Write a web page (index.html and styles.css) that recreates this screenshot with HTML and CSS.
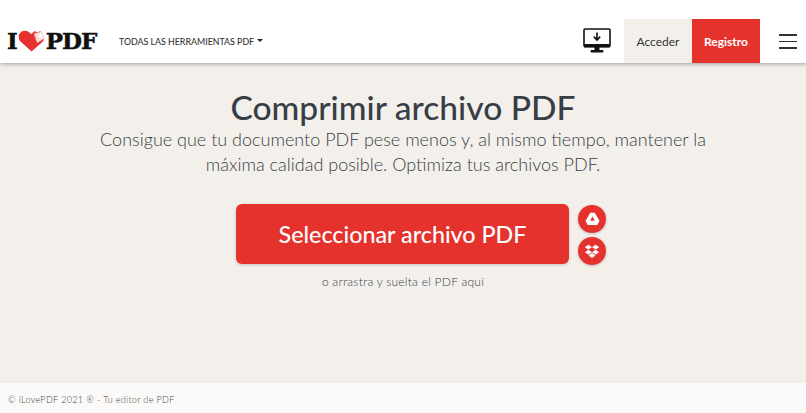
FILE: index.html
```html
<!DOCTYPE html>
<html lang="es">
<head>
  <meta charset="UTF-8" />
  <meta name="viewport" content="width=device-width, initial-scale=1.0"/>
  <title>Comprimir archivo PDF</title>
  <link rel="stylesheet" href="styles.css">
</head>
<body>

  <header class="header">
    <a class="logo">
      <span>I</span>
      <svg class="logo-heart" width="27" height="22" viewBox="0 0 27 22">
        <path d="M13.5 21.5 L2.5 11.5 C-1 7.5 1 1 6.5 .8 C9.5 .7 11.5 2 13 4 L17 1 L24 7 L25.5 11 Z" fill="#e5322d"/>
        <path d="M15.5 3.5 L22.5 1.5 L26 9 L19 13.5 Z" fill="#f9d9d6" stroke="#e5322d" stroke-width=".6"/>
        <path d="M22.5 1.5 L20.5 7 L26 9 Z" fill="#fff"/>
      </svg>
      <span>PDF</span>
    </a>
    <nav class="tools-link">TODAS LAS HERRAMIENTAS PDF<i class="caret"></i></nav>

    <div class="header-right">
      <svg class="desktop-icon" width="28" height="26" viewBox="0 0 28 26">
        <rect x="1" y="1" width="26" height="17.5" rx="1" fill="#fff" stroke="#111" stroke-width="1.6"/>
        <rect x="1" y="16" width="26" height="3.5" fill="#111"/>
        <rect x="11.5" y="19" width="5" height="3" fill="#111"/>
        <rect x="7.5" y="22" width="13" height="2.6" rx="1" fill="#111"/>
        <path d="M14 4.5 V11.5 M10.8 8.6 L14 12 L17.2 8.6" fill="none" stroke="#111" stroke-width="1.6"/>
      </svg>
      <a class="btn-login">Acceder</a>
      <a class="btn-register">Registro</a>
      <div class="burger"><span></span><span></span><span></span></div>
    </div>
  </header>

  <main class="main">
    <h1>Comprimir archivo PDF</h1>
    <p class="subtitle">Consigue que tu documento PDF pese menos y, al mismo tiempo, mantener la<br>máxima calidad posible. Optimiza tus archivos PDF.</p>

    <div class="uploader">
      <a class="btn-select">Seleccionar archivo PDF</a>
      <div class="cloud-btns">
        <a class="cloud-btn">
          <svg width="15" height="14" viewBox="0 0 15 14">
            <path d="M5.2 .8 H9.8 L14.5 9 L12.2 13 H2.8 L.5 9 Z M7.5 4.6 L5.2 8.8 H9.8 Z" fill="#fff" fill-rule="evenodd"/>
          </svg>
        </a>
        <a class="cloud-btn">
          <svg width="16" height="15" viewBox="0 0 16 15">
            <path d="M4.4 .8 L8 3.2 L4.4 5.6 L.8 3.2 Z M11.6 .8 L15.2 3.2 L11.6 5.6 L8 3.2 Z M4.4 5.8 L8 8.2 L4.4 10.6 L.8 8.2 Z M11.6 5.8 L15.2 8.2 L11.6 10.6 L8 8.2 Z M4.4 11.4 L8 9 L11.6 11.4 L8 13.9 Z" fill="#fff"/>
          </svg>
        </a>
      </div>
    </div>
    <p class="drop-hint">o arrastra y suelta el PDF aquí</p>
  </main>

  <footer class="footer">© iLovePDF 2021 ® - Tu editor de PDF</footer>

</body>
</html>
```

FILE: styles.css
```css
body {
  font-family: Lato, "Open Sans", sans-serif;
  background-color: #f3f0ec;
  color: #383e45;
  margin: 0;
  height: 413px;
  display: flex;
  flex-direction: column;
  overflow: hidden;
}

.header {
  height: 63px;
  background: white;
  box-shadow: 0 1px 4px rgba(0, 0, 0, 0.35);
  display: flex;
  align-items: center;
  padding-left: 7px;
  flex-shrink: 0;
}

.logo {
  display: flex;
  align-items: center;
  width: 94px;
  margin-top: 18px;
  font-family: "DejaVu Serif", serif;
  font-weight: bold;
  font-size: 23px;
  color: #111;
  letter-spacing: -1px;
  -webkit-text-stroke: 0.5px #111;
}

.logo-heart {
  margin: 0 1px 0 1px;
}

.tools-link {
  margin-left: 18px;
  margin-top: 19px;
  font-size: 8.8px;
  font-weight: 500;
  color: #333;
  display: flex;
  align-items: center;
}

.caret {
  margin-left: 3px;
  margin-bottom: 2px;
  border-left: 3px solid transparent;
  border-right: 3px solid transparent;
  border-top: 3px solid #222;
}

.header-right {
  margin-left: auto;
  display: flex;
  align-items: flex-end;
  height: 63px;
}

.desktop-icon {
  align-self: center;
  margin-right: 13px;
  margin-top: 18px;
}

.btn-login, .btn-register {
  height: 44px;
  display: flex;
  align-items: center;
  justify-content: center;
  font-size: 12px;
}

.btn-login {
  width: 68px;
  background-color: #f3f0ec;
  color: #333;
}

.btn-register {
  width: 68px;
  background-color: #e5322d;
  color: white;
  font-weight: bold;
}

.burger {
  align-self: center;
  margin: 20px 9px 0 19px;
  width: 18px;
  display: flex;
  flex-direction: column;
  gap: 5px;
}

.burger span {
  height: 1.5px;
  background: #333;
}

.main {
  flex: 1;
  display: flex;
  flex-direction: column;
  align-items: center;
  text-align: center;
}

h1 {
  margin: 25px 0 0;
  font-size: 33.6px;
  line-height: 38px;
  font-weight: 500;
  color: #383e45;
}

.subtitle {
  margin: 1px 0 0;
  font-size: 18px;
  line-height: 25px;
  font-weight: 300;
  color: #383e45;
}

.uploader {
  margin-top: 26px;
  display: flex;
  align-items: center;
  gap: 9px;
  margin-left: 36px;
}

.btn-select {
  width: 333px;
  height: 60px;
  background-color: #e5322d;
  color: white;
  border-radius: 6px;
  box-shadow: 0 1px 3px rgba(0, 0, 0, 0.2);
  font-size: 23.3px;
  font-weight: 500;
  display: flex;
  align-items: center;
  justify-content: center;
}

.cloud-btns {
  display: flex;
  flex-direction: column;
  gap: 4px;
  margin-top: 2px;
}

.cloud-btn {
  width: 28px;
  height: 28px;
  border-radius: 50%;
  background-color: #e5322d;
  box-shadow: 0 1px 3px rgba(0, 0, 0, 0.2);
  display: flex;
  align-items: center;
  justify-content: center;
}

.drop-hint {
  margin: 9px 0 0;
  font-size: 12px;
  line-height: 16px;
  letter-spacing: 0.25px;
  color: #383e45;
  font-weight: 300;
}

.footer {
  height: 27px;
  padding-top: 3px;
  background: #fbfaf8;
  display: flex;
  align-items: center;
  padding-left: 8px;
  font-size: 9px;
  letter-spacing: 0.35px;
  font-weight: 300;
  color: #444;
  flex-shrink: 0;
}
```
